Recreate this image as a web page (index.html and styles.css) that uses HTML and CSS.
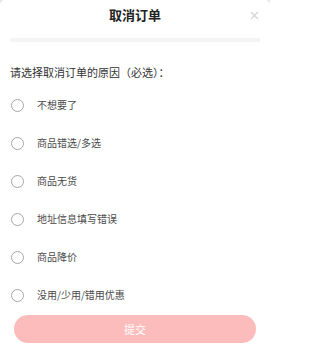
FILE: index.html
```html
<!DOCTYPE html>
<html lang="zh">
<head>
<meta charset="utf-8">
<link rel="stylesheet" href="styles.css">
</head>
<body>
<div class="sheet">
  <div class="header">
    <span class="title">取消订单</span>
    <span class="close">
      <svg width="9" height="9" viewBox="0 0 9 9"><path d="M1 1L8 8M8 1L1 8" stroke="#d2d2d2" stroke-width="1.1" fill="none"/></svg>
    </span>
  </div>
  <div class="bar"></div>
  <div class="prompt">请选择取消订单的原因（必选）：</div>
  <ul class="options">
    <li class="option"><span class="radio"></span><span class="label">不想要了</span></li>
    <li class="option"><span class="radio"></span><span class="label">商品错选/多选</span></li>
    <li class="option"><span class="radio"></span><span class="label">商品无货</span></li>
    <li class="option"><span class="radio"></span><span class="label">地址信息填写错误</span></li>
    <li class="option"><span class="radio"></span><span class="label">商品降价</span></li>
    <li class="option"><span class="radio"></span><span class="label">没用/少用/错用优惠</span></li>
  </ul>
  <div class="footer">
    <button class="submit">提交</button>
  </div>
</div>
</body>
</html>
```
FILE: styles.css
```css
html {
  margin: 0;
  padding: 0;
  background: #fff;
}
body {
  margin: 0;
  padding: 0;
  background: #e6e6e6;
  font-family: "Noto Sans CJK SC", "Noto Sans", sans-serif;
  width: 270px;
  height: 346px;
  overflow: hidden;
}
.sheet {
  background: #fff;
  border-radius: 5px 5px 0 0;
  height: 346px;
  box-sizing: border-box;
}
.header {
  position: relative;
  height: 30px;
  display: flex;
  align-items: center;
  justify-content: center;
}
.title {
  font-size: 13px;
  font-weight: 700;
  color: #222;
  line-height: 30px;
}
.close {
  position: absolute;
  right: 11px;
  top: 11px;
  width: 9px;
  height: 9px;
  display: flex;
}
.bar {
  margin: 8px 10px 0;
  height: 4px;
  background: #f4f4f4;
  border-radius: 1px;
}
.prompt {
  margin: 22px 0 0 10px;
  font-size: 11px;
  line-height: 16px;
  color: #333;
}
.options {
  list-style: none;
  margin: 6px 0 0;
  padding: 0;
}
.option {
  height: 38px;
  display: flex;
  align-items: center;
  padding-left: 11px;
}
.radio {
  width: 11px;
  height: 11px;
  border: 1.5px solid #a6a6a6;
  border-radius: 50%;
  flex: none;
}
.label {
  margin-left: 13px;
  font-size: 10px;
  color: #4a4a4a;
  line-height: 14px;
}
.footer {
  padding: 1px 14px 0;
}
.submit {
  display: block;
  width: 100%;
  height: 28px;
  border: none;
  border-radius: 14px;
  background: #fdbcbc;
  color: #fff;
  font-family: "Noto Sans CJK SC", "Noto Sans", sans-serif;
  font-size: 11px;
  padding: 0;
}
```
